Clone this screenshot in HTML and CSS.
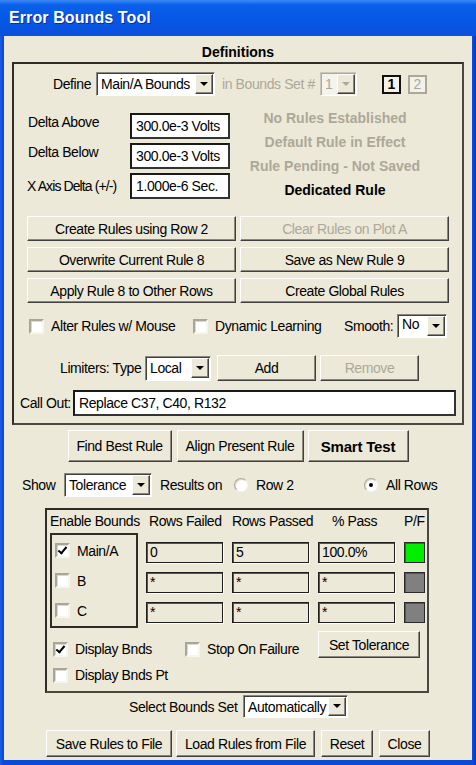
FILE: index.html
```html
<!DOCTYPE html>
<html lang="en">
<head>
    <meta charset="UTF-8">
    <title>Error Bounds Tool</title>
    <link rel="stylesheet" href="styles.css">
</head>
<body>
<div class="window">
    <div class="titlebar">Error Bounds Tool</div>
    <div class="client">
        <div class="section-title">Definitions</div>
        <div class="defs">
            <div class="define-row">
                <span class="define-label">Define</span>
                <div class="select main-select"><span class="select-text">Main/A Bounds</span><span class="drop"></span></div>
                <span class="set-label">in Bounds Set #</span>
                <div class="select set-select disabled"><span class="select-text">1</span><span class="drop"></span></div>
                <span class="set-box current">1</span>
                <span class="set-box">2</span>
            </div>

            <div class="delta-area">
                <div class="delta-grid">
                    <span class="delta-label">Delta Above</span>
                    <div class="edit">300.0e-3 Volts</div>
                    <span class="delta-label">Delta Below</span>
                    <div class="edit">300.0e-3 Volts</div>
                    <span class="delta-label x-axis">X Axis Delta (+/-)</span>
                    <div class="edit">1.000e-6 Sec.</div>
                </div>
                <div class="status-list">
                    <div class="status off">No Rules Established</div>
                    <div class="status off">Default Rule in Effect</div>
                    <div class="status off">Rule Pending - Not Saved</div>
                    <div class="status">Dedicated Rule</div>
                </div>
            </div>

            <div class="rule-buttons">
                <button class="btn">Create Rules using Row 2</button>
                <button class="btn" disabled>Clear Rules on Plot A</button>
                <button class="btn">Overwrite Current Rule 8</button>
                <button class="btn">Save as New Rule 9</button>
                <button class="btn">Apply Rule 8 to Other Rows</button>
                <button class="btn">Create Global Rules</button>
            </div>

            <div class="options-row">
                <label class="check-item alter"><span class="checkbox"></span><span class="check-text">Alter Rules w/ Mouse</span></label>
                <label class="check-item dynamic"><span class="checkbox"></span><span class="check-text">Dynamic Learning</span></label>
                <span class="smooth-label">Smooth:</span>
                <div class="select smooth-select"><span class="select-text top">No</span><span class="drop"></span></div>
            </div>

            <div class="limiters-row">
                <span class="limiters-label">Limiters: Type</span>
                <div class="select local-select"><span class="select-text">Local</span><span class="drop"></span></div>
                <button class="btn add-btn">Add</button>
                <button class="btn remove-btn" disabled>Remove</button>
            </div>

            <div class="callout-row">
                <span class="callout-label">Call Out:</span>
                <div class="edit callout-edit">Replace C37, C40, R132</div>
            </div>
        </div>

        <div class="action-row">
            <button class="btn find-btn">Find Best Rule</button>
            <button class="btn align-btn">Align Present Rule</button>
            <button class="btn smart-btn">Smart Test</button>
        </div>

        <div class="show-row">
            <span class="show-label">Show</span>
            <div class="select tol-select"><span class="select-text">Tolerance</span><span class="drop"></span></div>
            <span class="results-label">Results on</span>
            <label class="radio-item row2"><span class="radio"></span><span class="radio-text">Row 2</span></label>
            <label class="radio-item"><span class="radio selected"></span><span class="radio-text">All Rows</span></label>
        </div>

        <div class="results">
            <div class="results-head">
                <span class="head-enable">Enable Bounds</span>
                <span class="head-failed">Rows Failed</span>
                <span class="head-passed">Rows Passed</span>
                <span class="head-pass">% Pass</span>
                <span class="head-pf">P/F</span>
            </div>
            <div class="results-body">
                <div class="enable-box">
                    <label class="check-item"><span class="checkbox checked"></span><span class="check-text">Main/A</span></label>
                    <label class="check-item"><span class="checkbox"></span><span class="check-text">B</span></label>
                    <label class="check-item"><span class="checkbox"></span><span class="check-text">C</span></label>
                </div>
                <div class="result-grid">
                    <div class="cell">0</div>
                    <div class="cell">5</div>
                    <div class="cell">100.0%</div>
                    <div class="lamp pass"></div>
                    <div class="cell">*</div>
                    <div class="cell">*</div>
                    <div class="cell">*</div>
                    <div class="lamp"></div>
                    <div class="cell">*</div>
                    <div class="cell">*</div>
                    <div class="cell">*</div>
                    <div class="lamp"></div>
                </div>
            </div>
            <div class="display-row">
                <label class="check-item disp"><span class="checkbox checked"></span><span class="check-text">Display Bnds</span></label>
                <label class="check-item stop"><span class="checkbox"></span><span class="check-text">Stop On Failure</span></label>
                <button class="btn tol-btn">Set Tolerance</button>
            </div>
            <div class="display-pt-row">
                <label class="check-item"><span class="checkbox"></span><span class="check-text">Display Bnds Pt</span></label>
            </div>
        </div>

        <div class="bounds-row">
            <span class="bounds-label">Select Bounds Set</span>
            <div class="select auto-select"><span class="select-text">Automatically</span><span class="drop"></span></div>
        </div>

        <div class="bottom-row">
            <button class="btn save-btn">Save Rules to File</button>
            <button class="btn load-btn">Load Rules from File</button>
            <button class="btn reset-btn">Reset</button>
            <button class="btn close-btn">Close</button>
        </div>
    </div>
</div>
</body>
</html>
```

FILE: styles.css
```css
* {
    box-sizing: border-box;
}
body {
    margin: 0;
    font-family: "Liberation Sans", Arial, sans-serif;
    font-size: 14px;
    letter-spacing: -0.4px;
    color: #000;
    background: #0a46d2;
}
.window {
    width: 476px;
    height: 765px;
    display: flex;
    flex-direction: column;
    background: linear-gradient(90deg, #1a5ee6, #0a4ad6 3px, #0a4ad6 calc(100% - 3px), #0636b8);
}
.titlebar {
    height: 36px;
    padding: 8px 0 0 9px;
    color: #fff;
    font-size: 16px;
    font-weight: bold;
    letter-spacing: 0.1px;
    line-height: 20px;
    background: linear-gradient(#3d8af7 0, #0a60ea 5px, #0558e6 50%, #0a50dc 100%);
    text-shadow: 1px 1px 0 #0a2f99;
}
.client {
    flex: 1;
    margin: 0 4px 5px;
    background: #ece9d8;
}
.section-title {
    padding-top: 7px;
    line-height: 18px;
    text-align: center;
    font-weight: bold;
    letter-spacing: 0;
}

/* definitions frame */
.defs {
    margin: 1px 0 0 8px;
    width: 452px;
    height: 363px;
    padding-top: 8px;
    border: 2px solid #2e2d28;
    border-right-color: #4a4840;
    border-bottom-color: #4a4840;
}
.define-row {
    display: flex;
    align-items: center;
    height: 24px;
    padding-left: 39px;
    white-space: nowrap;
}
.define-label {
    width: 43px;
}
.set-label {
    width: 98px;
    margin-left: 7px;
    color: #aca899;
}
.set-box {
    width: 19px;
    height: 19px;
    margin-left: 7px;
    border: 2px solid #aca899;
    background: #f2f1ea;
    color: #aca899;
    font-size: 14px;
    line-height: 15px;
    text-align: center;
    letter-spacing: 0;
}
.set-box.current {
    margin-left: 25px;
    border-color: #111;
    color: #000;
    font-weight: bold;
}

/* select boxes */
.select {
    display: flex;
    align-items: center;
    justify-content: space-between;
    height: 24px;
    padding: 0 1px 0 4px;
    background: #fff;
    border: 1px solid;
    border-color: #8a887e #fff #fff #8a887e;
    box-shadow: inset 1px 1px 0 #404040;
    white-space: nowrap;
}
.select-text.top {
    align-self: flex-start;
    padding-top: 1px;
}
.drop {
    position: relative;
    width: 18px;
    height: 20px;
    background: #ece9d8;
    border: 1px solid;
    border-color: #fff #404040 #404040 #fff;
    box-shadow: inset -1px -1px 0 #8a887e;
}
.drop::after {
    content: "";
    position: absolute;
    left: 4px;
    top: 7px;
    border-left: 4px solid transparent;
    border-right: 4px solid transparent;
    border-top: 4px solid #000;
}
.select.disabled {
    background: #f4f3ee;
    color: #aca899;
    border-color: #c9c6b8 #fff #fff #c9c6b8;
    box-shadow: inset 1px 1px 0 #aca899;
}
.select.disabled .drop::after {
    border-top-color: #aca899;
}
.main-select {
    width: 119px;
}
.set-select {
    width: 37px;
}

/* text fields */
.edit {
    height: 26px;
    padding: 0 4px;
    line-height: 22px;
    background: #fff;
    border: 2px solid #1a1a1a;
    border-right-color: #333;
    border-bottom-color: #333;
    white-space: nowrap;
}

/* delta values and rule state */
.delta-area {
    display: flex;
    align-items: flex-start;
    height: 86px;
    margin-top: 17px;
}
.delta-grid {
    display: grid;
    grid-template-columns: 102px 100px;
    grid-auto-rows: 26px;
    row-gap: 4px;
    padding-left: 14px;
}
.delta-label {
    line-height: 18px;
    white-space: nowrap;
}
.delta-label.x-axis {
    align-self: center;
    margin-left: -1px;
    letter-spacing: -0.9px;
}
.status-list {
    width: 200px;
    margin: -7px 0 0 5px;
}
.status {
    line-height: 24px;
    text-align: center;
    font-weight: bold;
    letter-spacing: 0;
    white-space: nowrap;
}
.status.off {
    color: #aca899;
}

/* buttons */
.btn {
    height: 25px;
    padding: 0;
    font: inherit;
    letter-spacing: inherit;
    color: #000;
    background: #ece9d8;
    border: 1px solid;
    border-color: #fff #404040 #404040 #fff;
    box-shadow: inset -1px -1px 0 #8a887e;
    white-space: nowrap;
}
.btn:disabled {
    color: #aca899;
}
.rule-buttons {
    display: grid;
    grid-template-columns: 209px 209px;
    grid-auto-rows: 25px;
    column-gap: 4px;
    row-gap: 6px;
    margin-top: 17px;
    padding-left: 13px;
}

/* checkboxes and radios */
.check-item,
.radio-item {
    display: flex;
    align-items: center;
    white-space: nowrap;
}
.checkbox {
    position: relative;
    flex: none;
    width: 15px;
    height: 15px;
    background: #fff;
    border: 2px solid;
    border-color: #a9a699 #f6f5f0 #f6f5f0 #a9a699;
    box-shadow: inset 1px 1px 0 #dcd9cc;
}
.checkbox.checked::after {
    content: "";
    position: absolute;
    left: 3px;
    top: 0;
    width: 3px;
    height: 7px;
    border-right: 2px solid #000;
    border-bottom: 2px solid #000;
    transform: rotate(40deg);
}
.check-text {
    margin-left: 7px;
}
.radio {
    position: relative;
    flex: none;
    width: 14px;
    height: 14px;
    border-radius: 50%;
    background: #fff;
    border: 1px solid;
    border-color: #a9a699 #f6f5f0 #f6f5f0 #a9a699;
    box-shadow: inset 1px 1px 0 #dcd9cc;
}
.radio.selected::after {
    content: "";
    position: absolute;
    left: 4px;
    top: 4px;
    width: 4px;
    height: 4px;
    border-radius: 50%;
    background: #000;
}
.radio-text {
    margin-left: 8px;
}

/* options row */
.options-row {
    display: flex;
    align-items: center;
    height: 24px;
    margin-top: 11px;
    padding-left: 15px;
}
.check-item.alter {
    width: 164px;
}
.check-item.dynamic {
    width: 151px;
}
.smooth-label {
    width: 53px;
}
.smooth-select {
    width: 50px;
}

/* limiters */
.limiters-row {
    display: flex;
    align-items: center;
    height: 26px;
    margin-top: 17px;
    padding-left: 46px;
    white-space: nowrap;
}
.limiters-label {
    width: 85px;
}
.local-select {
    width: 66px;
    height: 25px;
}
.add-btn {
    width: 99px;
    height: 26px;
    margin-left: 6px;
}
.remove-btn {
    width: 99px;
    height: 26px;
    margin-left: 4px;
}

/* call out */
.callout-row {
    display: flex;
    align-items: center;
    margin-top: 9px;
    padding-left: 6px;
}
.callout-label {
    width: 53px;
    white-space: nowrap;
}
.callout-edit {
    width: 383px;
}

/* middle actions */
.action-row {
    display: flex;
    justify-content: center;
    gap: 4px;
    margin-top: 5px;
}
.action-row .btn {
    height: 32px;
}
.find-btn {
    width: 104px;
    margin-right: 1px;
}
.align-btn {
    width: 127px;
}
.smart-btn {
    width: 101px;
    font-weight: bold;
    font-size: 15px;
    letter-spacing: -0.2px;
}

/* show row */
.show-row {
    display: flex;
    align-items: center;
    height: 24px;
    margin-top: 11px;
    padding-left: 18px;
    white-space: nowrap;
}
.show-label {
    width: 42px;
}
.tol-select {
    width: 88px;
}
.results-label {
    width: 74px;
    margin-left: 8px;
}
.radio-item.row2 {
    width: 130px;
}

/* results frame */
.results {
    width: 384px;
    height: 185px;
    margin: 11px 0 0 41px;
    border: 2px solid #2e2d28;
    border-right-color: #4a4840;
    border-bottom-color: #4a4840;
}
.results-head {
    display: flex;
    padding-top: 2px;
    line-height: 18px;
    white-space: nowrap;
}
.head-enable {
    width: 102px;
    padding-left: 3px;
}
.head-failed {
    width: 83px;
}
.head-passed {
    width: 100px;
}
.head-pass {
    width: 72px;
}
.results-body {
    display: flex;
    margin-top: 3px;
}
.enable-box {
    display: flex;
    flex-direction: column;
    gap: 15px;
    width: 88px;
    height: 95px;
    margin-left: 3px;
    padding: 8px 0 0 3px;
    border: 2px solid #2e2d28;
}
.enable-box .check-item {
    height: 15px;
}
.result-grid {
    display: grid;
    grid-template-columns: 77px 77px 77px 21px;
    grid-auto-rows: 21px;
    column-gap: 9px;
    row-gap: 9px;
    margin: 9px 0 0 8px;
}
.cell {
    padding: 0 3px;
    line-height: 18px;
    background: #ece9d8;
    border: 1px solid #1e1e1e;
    box-shadow: inset 1px 1px 0 #555, 1px 1px 0 #fff;
}
.lamp {
    background: #808080;
    border: 1px solid #2a2a2a;
    box-shadow: inset 1px 1px 0 #555;
}
.lamp.pass {
    background: #00ee00;
}
.display-row {
    display: flex;
    align-items: flex-start;
    height: 27px;
    margin-top: 3px;
    padding-left: 6px;
}
.display-row .check-item {
    margin-top: 10px;
}
.check-item.disp {
    width: 132px;
}
.check-item.stop {
    width: 133px;
}
.tol-btn {
    width: 102px;
    height: 27px;
}
.display-pt-row {
    margin-top: 9px;
    padding-left: 6px;
}

/* bottom */
.bounds-row {
    display: flex;
    align-items: center;
    margin-top: 2px;
    padding-left: 125px;
    white-space: nowrap;
}
.bounds-label {
    width: 114px;
}
.auto-select {
    width: 105px;
    height: 23px;
}
.auto-select .drop {
    height: 19px;
}
.auto-select .drop::after {
    top: 6px;
}
.bottom-row {
    display: flex;
    margin-top: 12px;
    padding-left: 42px;
}
.bottom-row .btn {
    height: 27px;
}
.save-btn {
    width: 126px;
}
.load-btn {
    width: 139px;
    margin-left: 4px;
}
.reset-btn {
    width: 52px;
    margin-left: 6px;
}
.close-btn {
    width: 51px;
    margin-left: 6px;
}
```
